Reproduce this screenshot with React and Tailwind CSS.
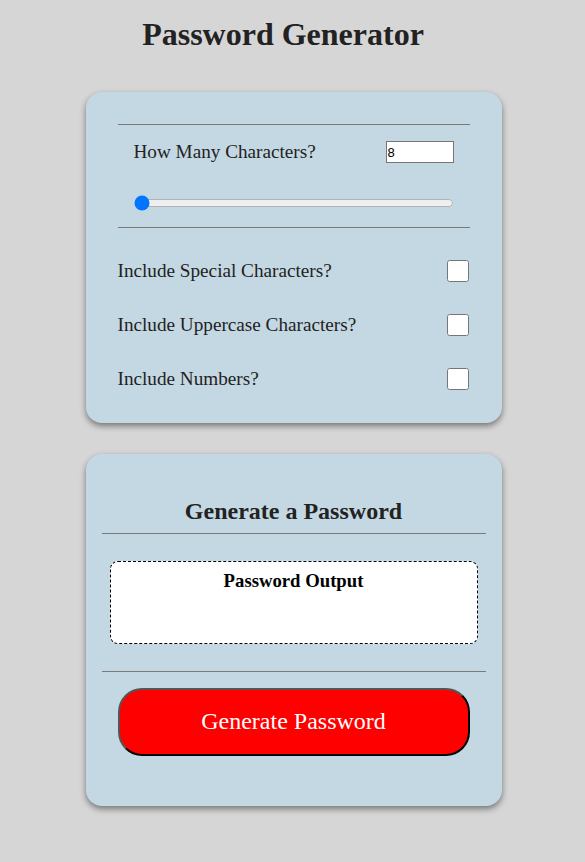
export default function App() {
  return (
    <div className="min-h-screen bg-[#d6d6d6] font-['Liberation_Serif',serif] text-[#222] pt-[15px] pb-[56px] pl-[2px]">
      <h1 className="pr-[21px] text-center text-[32px] leading-[38px] font-bold">Password Generator</h1>

      <div className="mx-auto mt-[39px] w-[416px] rounded-2xl bg-[#c4d8e3] px-8 pt-8 pb-[33px] shadow-[0_3px_6px_rgba(0,0,0,0.45)]">
        <hr className="border-t border-[#7a7a7a]" />
        <div className="mt-[16px] flex items-center justify-between px-4">
          <label className="text-[19.2px] leading-[22px]">How Many Characters?</label>
          <input
            type="number"
            defaultValue={8}
            className="h-[22px] w-[68px] border border-[#767676] bg-white px-[1px] text-[13px] font-['Liberation_Sans',sans-serif] text-black [appearance:textfield]"
          />
        </div>
        <div className="mt-[32px] px-4">
          <input type="range" min={8} max={128} defaultValue={8} className="block w-full" />
        </div>
        <hr className="mt-[16px] border-t border-[#7a7a7a]" />
        <div className="mt-[32px] flex flex-col gap-[32px]">
          {['Include Special Characters?', 'Include Uppercase Characters?', 'Include Numbers?'].map((t) => (
            <div key={t} className="flex items-center justify-between">
              <label className="text-[19.2px] leading-[22px]">{t}</label>
              <input type="checkbox" className="m-0 mr-[1px] h-[22px] w-[22px]" />
            </div>
          ))}
        </div>
      </div>

      <div className="mx-auto mt-[31px] w-[416px] rounded-2xl bg-[#c4d8e3] px-4 pt-[43px] pb-[50px] shadow-[0_3px_6px_rgba(0,0,0,0.45)]">
        <h2 className="text-center text-[24px] leading-[28px] font-bold">Generate a Password</h2>
        <hr className="mt-[8px] border-t border-[#7a7a7a]" />
        <div className="mx-2 mt-[27px] h-[83px] rounded-lg border border-dashed border-black bg-white pt-[8px] text-center">
          <p className="text-[18.72px] leading-[22px] font-bold text-black">Password Output</p>
        </div>
        <hr className="mt-[27px] border-t border-[#7a7a7a]" />
        <div className="mt-[16px] px-4">
          <button className="h-[68px] w-full rounded-3xl border-2 border-t-[#555] border-l-[#555] border-r-black border-b-black bg-[#ff0000] pb-[2px] text-[24px] text-white">
            Generate Password
          </button>
        </div>
      </div>
    </div>
  )
}
